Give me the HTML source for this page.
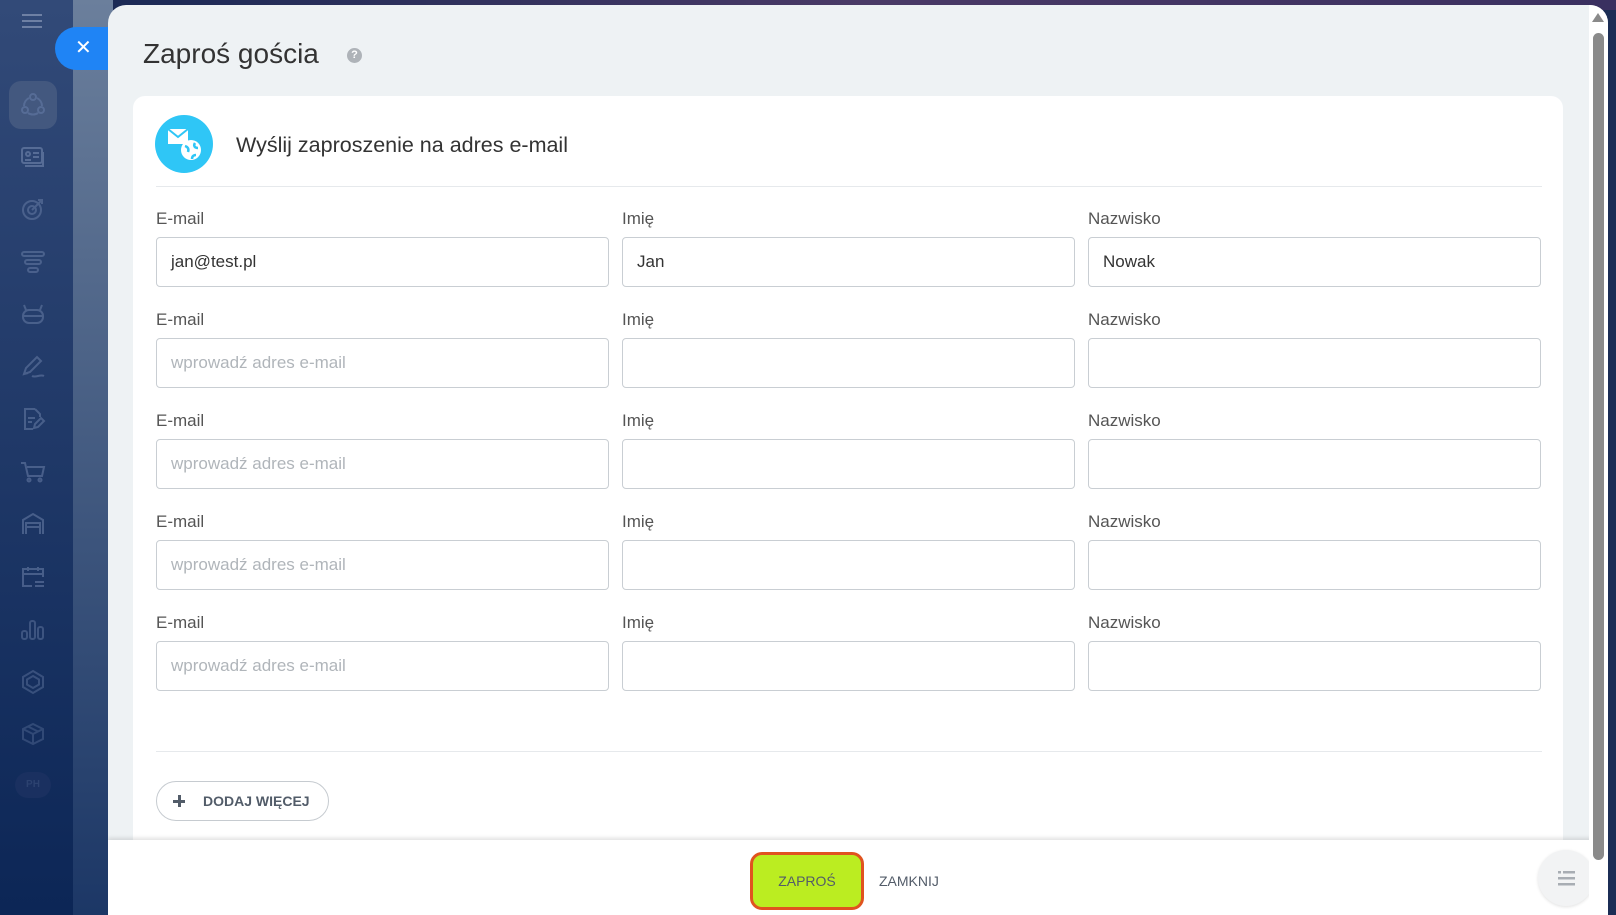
<!DOCTYPE html>
<html><head><meta charset="utf-8"><style>
*{box-sizing:border-box;margin:0;padding:0}
body{width:1616px;height:915px;overflow:hidden;position:relative;font-family:"Liberation Sans",sans-serif;background:#1b2d55}
.sb{position:absolute;left:0;top:0;width:73px;height:915px;background:linear-gradient(#324a78,#0c2656)}
.strip{position:absolute;left:73px;top:0;width:40px;height:915px;background:linear-gradient(#6b7f9c,#1c3766)}
.top{position:absolute;left:113px;top:0;width:1503px;height:10px;background:linear-gradient(90deg,#1b2a55,#4a3a66,#3a3060)}
.panel{position:absolute;left:108px;top:5px;width:1500px;height:910px;background:#eef2f4;border-radius:18px 18px 0 0;overflow:hidden}
.close{position:absolute;left:55px;top:27px;width:70px;height:43px;background:#1f84f5;border-radius:22px 0 0 22px;color:#fff;font-size:20px;line-height:43px;padding-left:20px}
h1{position:absolute;left:35px;top:33px;font-weight:normal;font-size:28px;color:#333}
.q{position:absolute;left:239px;top:43px;width:15px;height:15px;border-radius:50%;background:#aeb3b8;color:#fff;font-size:11px;font-weight:bold;text-align:center;line-height:15px}
.card{position:absolute;left:25px;top:91px;width:1430px;height:760px;background:#fff;border-radius:12px}
.ic{position:absolute;left:22px;top:19px;width:58px;height:58px;border-radius:50%;background:#2fc6f6}
.ht{position:absolute;left:103px;top:37px;font-size:21.5px;color:#333}
.hr{position:absolute;left:23px;width:1386px;height:1px;background:#e6e9ec}
.lb{position:absolute;font-size:17px;color:#555}
.in{position:absolute;height:50px;border:1px solid #c9ced3;border-radius:4px;font-size:17px;color:#333;padding-left:14px;line-height:48px}
.ph{color:#b0b5ba}
.add{position:absolute;left:23px;top:685px;width:173px;height:40px;border:1px solid #c6cbd0;border-radius:20px;font-size:14px;font-weight:bold;color:#525c69;line-height:38px;padding-left:46px}
.add:before{content:"";position:absolute;left:16px;top:13px;width:12px;height:12px;background:linear-gradient(#525c69,#525c69) center/12px 3px no-repeat,linear-gradient(#525c69,#525c69) center/3px 12px no-repeat}
.foot{position:absolute;left:0;top:835px;width:1500px;height:80px;background:#fff;box-shadow:0 -2px 4px rgba(0,0,0,.12)}
.zap{position:absolute;left:642px;top:12px;width:114px;height:58px;border:3px solid #e0531f;border-radius:12px;background:#bbed21;font-size:14px;color:#535c69;text-align:center;line-height:52px}
.zam{position:absolute;left:771px;top:12px;font-size:14px;color:#535c69;line-height:58px}
.menu{position:absolute;left:1430px;top:10px;width:56px;height:56px;border-radius:50%;background:#f2f3f4;box-shadow:0 1px 3px rgba(0,0,0,.12)}
.scr{position:absolute;left:1481px;top:0;width:19px;height:910px;background:#fff}
.th{position:absolute;left:4px;top:28px;width:11px;height:827px;background:#8a8a8a;border-radius:6px}
.si{position:absolute;left:20px;width:26px;height:26px;opacity:.75}
.si *{fill:none;stroke:#566c96;stroke-width:2}
</style></head><body>
<div class="sb">
<div style="position:absolute;left:22px;top:14px;width:20px;height:2px;background:#6e80a4;box-shadow:0 6px #6e80a4,0 12px #6e80a4"></div>
<div style="position:absolute;left:9px;top:81px;width:48px;height:48px;border-radius:12px;background:#43587f"></div>
<svg class="si" style="top:92px;opacity:1" viewBox="0 0 26 26"><circle cx="13" cy="5" r="3"/><circle cx="5" cy="18" r="3"/><circle cx="21" cy="18" r="3"/><path d="M9 6a9 9 0 0 0-5 8M17 6a9 9 0 0 1 5 8M8 21a9 9 0 0 0 10 0"/></svg>
<svg class="si" style="top:144px;opacity:1" viewBox="0 0 26 26"><rect x="2" y="4" width="20" height="15" rx="2"/><circle cx="8" cy="10" r="2"/><path d="M13 9h6M13 13h6M5 16h6M5 22h18v-14"/></svg>
<svg class="si" style="top:196px" viewBox="0 0 26 26"><circle cx="12" cy="14" r="9"/><circle cx="12" cy="14" r="4"/><path d="M12 14l9-9M18 4h4v4"/></svg>
<svg class="si" style="top:249px" viewBox="0 0 26 26"><rect x="2" y="3" width="22" height="4" rx="2"/><rect x="5" y="11" width="16" height="4" rx="2"/><rect x="8" y="19" width="10" height="4" rx="2"/></svg>
<svg class="si" style="top:301px" viewBox="0 0 26 26"><rect x="3" y="9" width="20" height="13" rx="6"/><path d="M6 9l-2-5M20 9l2-5M3 15h20"/></svg>
<svg class="si" style="top:354px" viewBox="0 0 26 26"><path d="M4 20l2-6 11-11 4 4-11 11zM4 20l4-1M12 22c4 2 8-2 12 0"/></svg>
<svg class="si" style="top:406px" viewBox="0 0 26 26"><path d="M15 3H5v20h8M15 3l5 5v3M8 12h7M8 16h4M14 22l1-4 6-6 3 3-6 6z"/></svg>
<svg class="si" style="top:459px" viewBox="0 0 26 26"><path d="M1 4h4l3 13h14l2-9H7"/><circle cx="9" cy="21" r="1.5"/><circle cx="20" cy="21" r="1.5"/></svg>
<svg class="si" style="top:511px" viewBox="0 0 26 26"><path d="M3 23V9l10-6 10 6v14M6 23V12h14v11M6 16h14"/></svg>
<svg class="si" style="top:564px" viewBox="0 0 26 26"><path d="M12 22H3V5h20v8M3 10h20M8 3v4M18 3v4M15 18h9M15 22h9"/></svg>
<svg class="si" style="top:616px;opacity:.6" viewBox="0 0 26 26"><rect x="2" y="15" width="5" height="8" rx="2"/><rect x="10" y="5" width="5" height="18" rx="2"/><rect x="18" y="11" width="5" height="12" rx="2"/></svg>
<svg class="si" style="top:669px;opacity:.55" viewBox="0 0 26 26"><path d="M13 2l10 6v10l-10 6-10-6V8z"/><path d="M13 7l6 3.5v5L13 19l-6-3.5v-5z"/></svg>
<svg class="si" style="top:721px;opacity:.45" viewBox="0 0 26 26"><path d="M13 3l10 5v10l-10 5-10-5V8zM3 8l10 5 10-5M13 13v10M8 5.5l10 5"/></svg>
<div style="position:absolute;left:15px;top:772px;width:36px;height:26px;border-radius:13px;background:#1a3060;color:#2c4270;font-size:10px;font-weight:bold;text-align:center;line-height:26px">PH</div>
</div>
<div class="strip"></div>
<div class="top"></div>
<div class="close">✕</div>
<div class="panel">
<h1>Zaproś gościa</h1><div class="q">?</div>
<div class="card">
<div class="ic"><svg width="58" height="58" viewBox="0 0 58 58"><rect x="13" y="14" width="20" height="15" fill="#fff"/><path d="M13 14l10 8 10-8" stroke="#2fc6f6" stroke-width="2" fill="none"/><circle cx="36" cy="35" r="10" fill="#fff"/><path d="M30 31c3 1 4 3 3 6M40 28c-2 3 0 5 3 5M37 44c0-3 2-4 4-4" stroke="#2fc6f6" stroke-width="2.5" fill="none"/></svg></div>
<div class="ht">Wyślij zaproszenie na adres e-mail</div>
<div class="hr" style="top:90px"></div>
<div class="hr" style="top:655px"></div>
<div class="add">DODAJ WIĘCEJ</div>
<div id="rows"></div>
</div>
<div class="foot"><div class="zap">ZAPROŚ</div><div class="zam">ZAMKNIJ</div><div class="menu"><svg width="56" height="56"><g fill="#a8adb3"><rect x="20" y="21" width="3" height="2.5"/><rect x="25" y="21" width="12" height="2.5"/><rect x="20" y="27" width="17" height="2.5"/><rect x="20" y="33" width="17" height="2.5"/></g></svg></div></div>
<div class="scr"><div style="position:absolute;left:3px;top:8px;border:6px solid transparent;border-bottom:9px solid #8a8a8a;border-top:0"></div><div class="th"></div></div>
</div>
<script>
var h='',cols=[23,489,955],names=['E-mail','Imię','Nazwisko'];
for(var r=0;r<5;r++){var y=r*101;for(var c=0;c<3;c++){h+='<div class="lb" style="left:'+cols[c]+'px;top:'+(113+y)+'px">'+names[c]+'</div>';var t='';if(r==0)t=['jan@test.pl','Jan','Nowak'][c];else if(c==0)t='<span class="ph">wprowadź adres e-mail</span>';h+='<div class="in" style="left:'+cols[c]+'px;top:'+(141+y)+'px;width:453px">'+t+'</div>';}}
document.getElementById('rows').innerHTML=h;
</script>
</body></html>
